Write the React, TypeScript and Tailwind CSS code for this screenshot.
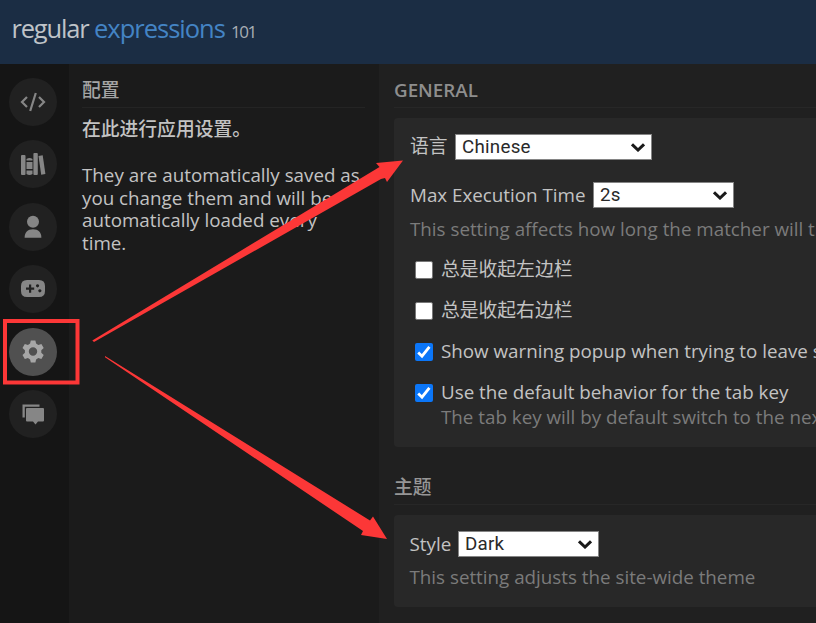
import React from "react";

const ui = "font-['Open_Sans','Noto_Sans_CJK_SC',sans-serif]";

function RailButton({ active, children }: { active?: boolean; children: React.ReactNode }) {
  return (
    <button className={`flex size-12 shrink-0 items-center justify-center rounded-full ${active ? "bg-[#505050] text-[#a6a6a6]" : "bg-[#212121] text-[#868686]"}`}>
      <svg viewBox="0 0 28 28" className="size-7" fill="currentColor">{children}</svg>
    </button>
  );
}

function Select({ value, className }: { value: string; className: string }) {
  return (
    <span className={`flex h-[26px] items-center justify-between border border-[#858585] bg-white pr-[6px] pl-[6px] font-['Roboto',sans-serif] text-[18.75px] tracking-[0.25px] text-[#2a2a2a] ${className}`}>
      {value}
      <svg viewBox="0 0 14 9" className="h-[9px] w-[14px]" fill="none" stroke="#1a1a1a" strokeWidth="3">
        <path d="M1 1.3 7 7 13 1.3" />
      </svg>
    </span>
  );
}

function Check({ checked, children, hint }: { checked?: boolean; children: React.ReactNode; hint?: string }) {
  return (
    <label className="flex h-[41px] items-start">
      <span className={`mt-[8px] ml-[5px] mr-[8px] flex size-[18px] shrink-0 items-center justify-center rounded-[2px] ${checked ? "bg-[#0b76f8]" : "border border-[#777] bg-white"}`}>
        {checked && (
          <svg viewBox="0 0 18 18" className="size-[18px]" fill="none" stroke="#fff" strokeWidth="2.8">
            <path d="M3.2 9.5 7 13.2 14.4 3.8" />
          </svg>
        )}
      </span>
      <span className="pt-[4px] leading-[25px] whitespace-nowrap">
        {children}
        {hint && <span className="block text-[#7b7b7b]">{hint}</span>}
      </span>
    </label>
  );
}

export default function App() {
  return (
    <div className={`relative flex h-[623px] w-[816px] flex-col overflow-hidden bg-[#202020] text-[18.8px] text-[#c3c3c3] ${ui}`}>
      <header className="flex h-16 shrink-0 items-baseline bg-[#1b2d44] pt-[10px] pl-[11.5px] text-[25.5px] leading-9 tracking-[-1.2px] whitespace-nowrap">
        <span className="w-[82.5px] text-[#bfc3c8]">regular</span>
        <span className="w-[137px] tracking-[-1px] text-[#4484c4]">expressions</span>
        <span className="text-[17px] tracking-[-1.5px] text-[#a8adb4]">101</span>
      </header>
      <div className="flex min-h-0 flex-1">
        <nav className="flex w-[68.5px] shrink-0 flex-col gap-[14.4px] bg-[#151515] pt-[14px] pl-[8.5px]">
          <RailButton>
            <path d="M8 9 3 14l5 5M20 9l5 5-5 5M16.8 5 11.2 23" fill="none" stroke="currentColor" strokeWidth="2.2" />
          </RailButton>
          <RailButton>
            <rect x="2" y="5" width="4.5" height="20" rx="1" />
            <path d="M7.500 9q3-2 6 0v1.500h-6zM7.500 12h6v7h-6zM7.500 20.500h6V24q-3 2-6 0z" />
            <rect x="14.4" y="3" width="4.4" height="22" rx="1" />
            <path d="m19.500 6 4.200-.7L26.400 24l-4.200.7z" />
          </RailButton>
          <RailButton>
            <circle cx="14" cy="8.7" r="6" />
            <path d="M5.600 24.700c0-5 3-8.400 8.400-8.400s8.400 3.400 8.400 8.400z" />
          </RailButton>
          <RailButton>
            <path fillRule="evenodd" d="M8 5h12q6 0 6 6v5q0 6-6 6H8q-6 0-6-6v-5q0-6 6-6zm2 4.500v3H7v2.200h3v3h2.200v-3h3v-2.200h-3v-3zm8.500-.3a1.600 1.600 0 1 0 .1 0zm2.300 5a1.600 1.600 0 1 0 .1 0z" />
          </RailButton>
          <RailButton active>
            <path fillRule="evenodd" d="m11.800 2.500-.7 3.100-2.200 1.300-3.100-1-2.300 4.100 2.400 2.200v2.600l-2.400 2.200 2.300 4.100 3.100-1 2.200 1.300.7 3.200h4.600l.7-3.200 2.200-1.300 3.100 1 2.300-4.100-2.400-2.200v-2.600l2.400-2.200-2.300-4.100-3.100 1-2.200-1.300-.7-3.100zM14 9.300a4.200 4.200 0 1 1 0 8.400 4.200 4.200 0 0 1 0-8.400z" />
          </RailButton>
          <RailButton>
            <path d="M3.500 4.500h17v2.300H5.800v10.700H3.500z" />
            <path d="M8 8h16q1 0 1 1v11.500q0 1-1 1h-5L16.500 24.500 14 21.500H8q-1 0-1-1V9q0-1 1-1z" />
          </RailButton>
        </nav>
        <aside className="w-[310px] shrink-0 bg-[#1b1b1b] px-[13.5px] leading-[22.7px]">
          <h2 className="mb-[10px] h-[44px] border-b border-[#242424] pt-[14.5px] font-medium text-[#a4a4a4]">配置</h2>
          <p className="font-medium">在此进行应用设置。</p>
          <p className="pt-[23.2px] whitespace-nowrap">They are automatically saved as<br />you change them and will be<br />automatically loaded every<br />time.</p>
        </aside>
        <main className="min-w-0 flex-1 pl-[15.5px]">
          <h2 className="h-[44px] border-b border-[#272727] pt-[12.5px] leading-[26px] font-semibold text-[#8e8e8e]">GENERAL</h2>
          <section className="mt-[10px] h-[329px] rounded-l-[4px] bg-[#282828] pt-4 pl-4">
            <div className="flex h-[26px] items-center"><span className="w-[45px] -translate-y-px">语言</span><Select value="Chinese" className="w-[197px]" /></div>
            <div className="mt-[22px] flex h-[26px] items-center whitespace-nowrap"><span className="w-[183px]">Max Execution Time</span><Select value="2s" className="w-[141px]" /></div>
            <p className="mt-[9px] mb-[11px] leading-[25px] whitespace-nowrap text-[#7b7b7b]">This setting affects how long the matcher will try</p>
            <Check>总是收起左边栏</Check>
            <Check>总是收起右边栏</Check>
            <Check checked>Show warning popup when trying to leave site</Check>
            <Check checked hint="The tab key will by default switch to the next">Use the default behavior for the tab key</Check>
          </section>
          <h2 className="mt-[14px] h-[44px] border-b border-[#272727] pt-[13px] leading-[26px] font-medium text-[#969696]">主题</h2>
          <section className="mt-[10px] h-[92px] rounded-l-[4px] bg-[#282828] pt-[15px] pl-[15.5px]">
            <div className="flex items-center"><span className="w-[48.5px]">Style</span><Select value="Dark" className="w-[141px]" /></div>
            <p className="mt-[7px] leading-[25px] whitespace-nowrap text-[#7b7b7b]">This setting adjusts the site-wide theme</p>
          </section>
        </main>
      </div>
      <svg className="pointer-events-none absolute inset-0" width="816" height="623" viewBox="0 0 816 623" fill="#fc3737">
        <rect x="5" y="321" width="72.500" height="61.500" fill="none" stroke="#fc3737" strokeWidth="4" />
        <path d="M92.300 340.500 379.500 167l-3.500-4 27-2.500-16 21.500-2-4-4 1L94 342z" />
        <path d="M105 356 370 520.500l3-4 14 22.500-26-4 2-4L105 357.200z" />
      </svg>
    </div>
  );
}
